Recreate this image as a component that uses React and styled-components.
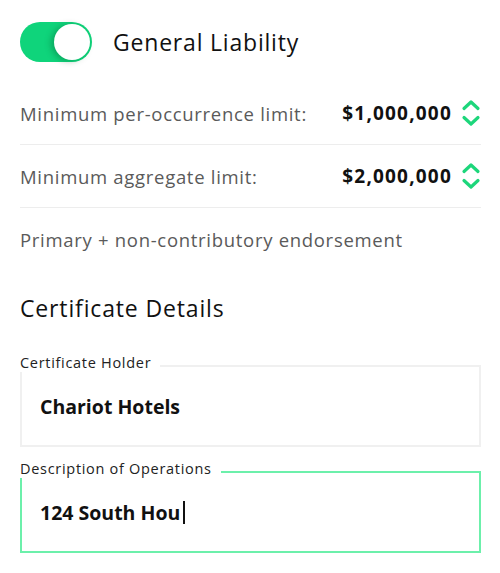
import styled, { createGlobalStyle } from 'styled-components';

const GlobalStyle = createGlobalStyle`
  body {
    margin: 0;
    background: #ffffff;
    font-family: "Open Sans", "Liberation Sans", sans-serif;
  }
`;

const Page = styled.div`
  padding: 22px 19px 0 20px;
`;

const Header = styled.div`
  display: flex;
  align-items: center;
  gap: 21px;
  height: 40px;
`;

const Toggle = styled.div`
  width: 72px;
  height: 40px;
  border-radius: 20px;
  background: #0fd47b;
  display: flex;
  align-items: center;
  justify-content: ${p => (p.$on ? 'flex-end' : 'flex-start')};
  padding: 2px;
  box-sizing: border-box;
`;

const Knob = styled.div`
  width: 36px;
  height: 36px;
  border-radius: 50%;
  background: #ffffff;
  box-shadow: -3px 1px 6px rgba(0, 80, 40, 0.35);
`;

const Title = styled.div`
  font-size: 23px;
  letter-spacing: 0.8px;
  color: #111;
`;

const Rows = styled.div`
  margin-top: 20px;
`;

const Row = styled.div`
  display: flex;
  align-items: center;
  justify-content: space-between;
  height: 62px;
  border-bottom: ${p => (p.$divider ? '1px solid #ededed' : 'none')};
`;

const RowLabel = styled.span`
  font-size: 18.5px;
  letter-spacing: 0.7px;
  color: #5a5a5a;
`;

const ValueGroup = styled.div`
  display: flex;
  align-items: center;
  gap: 9px;
`;

const Value = styled.span`
  font-size: 19px;
  font-weight: 700;
  letter-spacing: 1.2px;
  color: #111;
`;

const SectionTitle = styled.div`
  margin-top: 24px;
  font-size: 23px;
  line-height: 28px;
  letter-spacing: 0.85px;
  color: #111;
`;

const Field = styled.div`
  position: relative;
  margin-top: ${p => p.$gap}px;
`;

const FieldLabel = styled.span`
  position: absolute;
  left: 0;
  top: -11px;
  font-size: 14.5px;
  line-height: 18px;
  letter-spacing: 0.7px;
  color: #222;
  background: #ffffff;
  padding-right: ${p => p.$pad}px;
`;

const FieldBox = styled.div`
  height: 82px;
  box-sizing: border-box;
  border: 2px solid ${p => (p.$focused ? '#6cf0ab' : '#f0f0f0')};
  display: flex;
  align-items: center;
  padding-left: 18px;
`;

const FieldValue = styled.span`
  font-size: 19.5px;
  font-weight: 700;
  color: #111;
`;

const Caret = styled.span`
  display: inline-block;
  width: 1.5px;
  height: 23px;
  background: #111;
  margin-left: 3px;
`;

const Stepper = () => (
  <svg width="20" height="30" viewBox="0 0 20 30" fill="none">
    <path d="M3 10.5 L10 4 L17 10.5" stroke="#1dd67b" strokeWidth="3.2" strokeLinecap="round" strokeLinejoin="round" />
    <path d="M3 19.5 L10 26 L17 19.5" stroke="#1dd67b" strokeWidth="3.2" strokeLinecap="round" strokeLinejoin="round" />
  </svg>
);

const limits = [
  { label: 'Minimum per-occurrence limit:', value: '$1,000,000' },
  { label: 'Minimum aggregate limit:', value: '$2,000,000' },
];

export default function App() {
  return (
    <>
      <GlobalStyle />
      <Page>
        <Header>
          <Toggle $on>
            <Knob />
          </Toggle>
          <Title>General Liability</Title>
        </Header>

        <Rows>
          {limits.map(l => (
            <Row key={l.label} $divider>
              <RowLabel>{l.label}</RowLabel>
              <ValueGroup>
                <Value>{l.value}</Value>
                <Stepper />
              </ValueGroup>
            </Row>
          ))}
          <Row>
            <RowLabel>Primary + non-contributory endorsement</RowLabel>
          </Row>
        </Rows>

        <SectionTitle>Certificate Details</SectionTitle>

        <Field $gap={43}>
          <FieldLabel $pad={9}>Certificate Holder</FieldLabel>
          <FieldBox>
            <FieldValue>Chariot Hotels</FieldValue>
          </FieldBox>
        </Field>

        <Field $gap={24}>
          <FieldLabel $pad={9}>Description of Operations</FieldLabel>
          <FieldBox $focused>
            <FieldValue>124 South Hou</FieldValue>
            <Caret />
          </FieldBox>
        </Field>
      </Page>
    </>
  );
}
